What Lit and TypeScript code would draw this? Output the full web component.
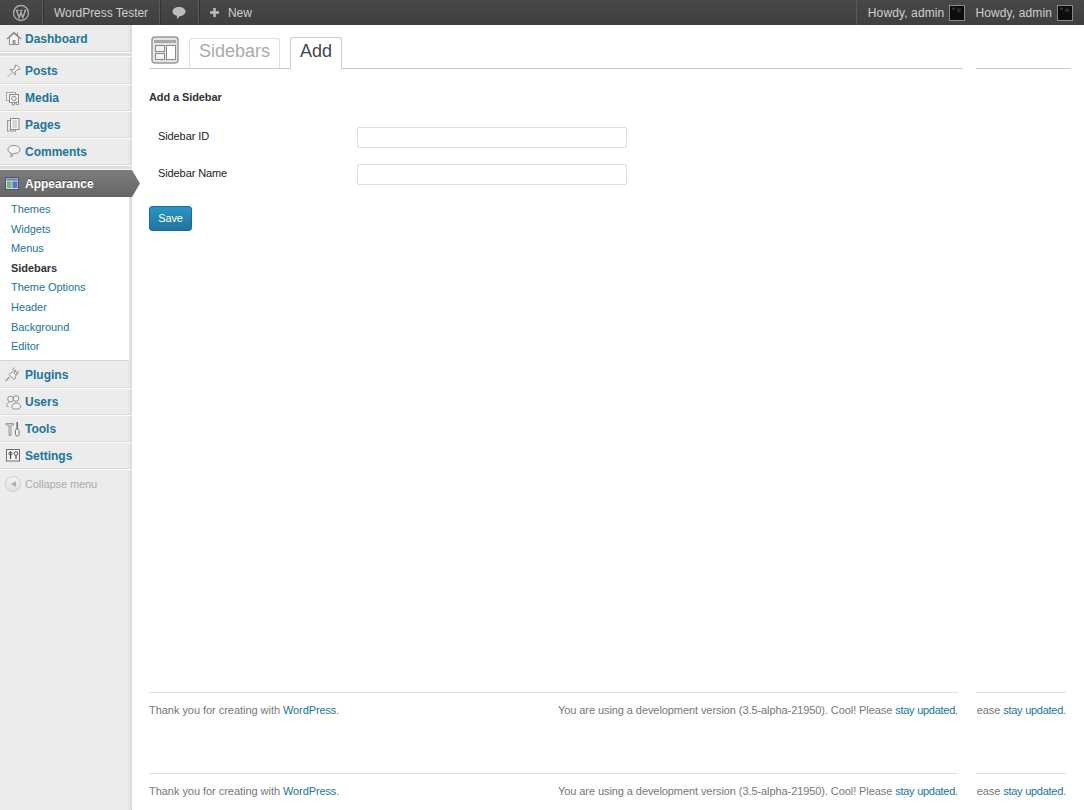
import { LitElement, html, css, svg } from "lit";
import { customElement } from "lit/decorators.js";

const INK = "#8c8c8c";
const FILL = "#f4f4f4";

const icons: Record<string, unknown> = {
  dashboard: svg`<path d="M4.500 8.500V15.500H13.500V8.500L9 4.500z" fill=${FILL} stroke=${INK}/><path d="M2 10 9 3.500 16 10" fill="none" stroke=${INK} stroke-width="1.300"/><path d="M12.500 3.500V6.500" stroke=${INK}/><rect x="7.500" y="11" width="3" height="4.500" fill="#999"/>`,
  posts: svg`<path d="M2.500 16 7 11.500" stroke="#aaa"/><path d="M5 8.500 8 9l2.500-3L10 4.500 11.500 4 15 7.500l-1 1.500-1.500-.5L10 11l.5 3z" fill=${FILL} stroke=${INK} stroke-linejoin="round"/>`,
  media: svg`<rect x="1.500" y="4.500" width="9" height="8" fill=${FILL} stroke="#a5a5a5"/><rect x="4.500" y="6.500" width="9" height="8" fill=${FILL} stroke=${INK}/><circle cx="9" cy="10.500" r="2.200" fill="none" stroke=${INK}/><circle cx="8.500" cy="15.800" r="1.300" fill="#fff" stroke="#777"/><circle cx="12.500" cy="15.500" r="1.300" fill="#fff" stroke="#777"/>`,
  pages: svg`<rect x="2.500" y="5.500" width="8" height="10.500" fill="#e6e6e6" stroke="#999"/><rect x="5.500" y="3.500" width="8.500" height="11" fill=${FILL} stroke=${INK}/><path d="M7.500 6h4.500M7.500 8h4.500M7.500 10h4.500M7.500 12h4.500" stroke="#b5b5b5"/>`,
  comments: svg`<path d="M9 3.500c3.500 0 6 1.500 6 4s-2.500 4-5.500 4H8L6.500 15l-.5-.2V11C4 10.500 3 9 3 7.500c0-2.500 2.500-4 6-4z" fill=${FILL} stroke=${INK} stroke-linejoin="round"/>`,
  plugins: svg`<path d="M.500 16 4.500 12" stroke="#999" stroke-width="1.200"/><path d="M4 9.500 9 14.500l1.500-1.500-.5-1.500 3-3-.5-1-2 2-1.500-1.500 2-2.500-1-.5L7 7.500 5.500 8z" fill=${FILL} stroke=${INK} stroke-linejoin="round"/><path d="M9 2.500 7.500 5M14 6 11.500 7.500" stroke="#999"/>`,
  users: svg`<circle cx="5.500" cy="7" r="2.800" fill=${FILL} stroke=${INK}/><circle cx="11" cy="6.500" r="2.800" fill=${FILL} stroke=${INK}/><path d="M3.500 15c-2.500-.5-2.500-3 .5-5M7.500 16.500c-1.500-2 .5-5.500 3.500-5.500 3.500 0 5.500 2.500 4 5-.5 1-6 1.500-7.500.5z" fill=${FILL} stroke=${INK}/>`,
  tools: svg`<path d="M1 4.500H8.500V6H6V16.500H4V6H1z" fill="#dcdcdc" stroke=${INK} stroke-width=".8"/><rect x="10.500" y="10" width="3.500" height="7" rx="1.500" fill=${FILL} stroke="#777"/><path d="M12.200 3v7" stroke="#666" stroke-width="1.500"/>`,
  settings: svg`<rect x="1.500" y="3.500" width="13" height="11.500" fill=${FILL} stroke="#6e6e6e"/><path d="M5.500 6v7M11 9v4" stroke="#555" stroke-width="1.300"/><circle cx="5.500" cy="7.500" r="1.600" fill="none" stroke="#555"/><circle cx="11" cy="7.500" r="1.900" fill="#fff" stroke="#555"/>`,
  appearance: svg`<rect x=".500" y="3.500" width="13" height="12" fill="#cfd8e2" stroke="#48586a"/><rect x="1.500" y="4.500" width="11" height="2" fill="#5f7f9f"/><rect x="2" y="7.500" width="4.500" height="6.500" fill="#7db56f"/><rect x="7.500" y="7.500" width="5" height="6.500" fill="#5e74c8"/>`,
};

const TOP_A = [["Dashboard", "dashboard"]];
const TOP_B = [["Posts", "posts"], ["Media", "media"], ["Pages", "pages"], ["Comments", "comments"]];
const SUB = ["Themes", "Widgets", "Menus", "Sidebars", "Theme Options", "Header", "Background", "Editor"];
const TOP_C = [["Plugins", "plugins"], ["Users", "users"], ["Tools", "tools"], ["Settings", "settings"]];

@customElement("app-root")
export class AppRoot extends LitElement {
  static styles = css`
    :host {
      display: block;
      height: 810px;
      overflow: hidden;
      background: #fff;
      font-family: "Liberation Sans", Arial, sans-serif;
      font-size: 11px;
      letter-spacing: -0.1px;
      color: #333;
    }

    a {
      color: #21759b;
      text-decoration: none;
    }

    /* admin bar */
    .bar {
      display: flex;
      justify-content: space-between;
      height: 25px;
      background: linear-gradient(#484848, #3f3f3f);
      color: #cfcfcf;
      font-size: 12px;
      letter-spacing: -0.06px;
    }

    .bar-group {
      display: flex;
    }

    .bar-item {
      display: flex;
      align-items: center;
      border-right: 1px solid #5a5a5a;
      box-shadow: 1px 0 0 #333;
    }

    .bar-item.wp {
      width: 43px;
      box-sizing: border-box;
      padding-left: 12px;
    }

    .bar-item.site {
      padding: 0 11px;
    }

    .bar-item.bubble {
      padding: 0 11px;
    }

    .bar-item.new {
      padding-left: 10px;
      gap: 8px;
      border: none;
      box-shadow: none;
    }

    .howdy {
      display: flex;
      align-items: center;
      gap: 5px;
      margin-left: 10px;
      letter-spacing: 0.12px;
    }

    .howdy.first {
      margin-left: 0;
      padding-left: 11px;
      border-left: 1px solid #5a5a5a;
    }

    .howdy.last {
      padding-right: 11px;
    }

    .avatar {
      width: 14px;
      height: 14px;
      border: 1px solid #8a8a8a;
      background:
        radial-gradient(circle at 25% 20%, #4a4a4a 0, transparent 2px),
        radial-gradient(circle at 65% 30%, #3c3c3c 0, transparent 3px),
        #0d0d0d;
    }

    .layout {
      display: flex;
      height: 785px;
    }

    /* side menu */
    .menu {
      flex: none;
      width: 132px;
      background: linear-gradient(to right, #ececec 128px, #e3e3e3 130px, #d6d6d6 132px);
      font-weight: bold;
      font-size: 12px;
      letter-spacing: 0;
    }

    .menu-item {
      display: flex;
      align-items: center;
      height: 24px;
      padding: 2px 0 0 25px;
      position: relative;
      border-bottom: 1px solid #dcdcdc;
      box-shadow: 0 1px 0 #f8f8f8;
    }

    .menu-item svg {
      position: absolute;
      left: 5px;
      top: 4px;
    }

    .menu-sep {
      height: 4px;
      background: #dedede;
      border-bottom: 1px solid #f6f6f6;
    }

    .current {
      position: relative;
      display: flex;
      align-items: center;
      width: 140px;
      height: 27px;
      box-sizing: border-box;
      padding-left: 25px;
      color: #fff;
      background: linear-gradient(#7c7c7c, #666);
      text-shadow: 0 -1px 0 #444;
      clip-path: polygon(0 0, 132px 0, 140px 50%, 132px 100%, 0 100%);
    }

    .current svg {
      position: absolute;
      left: 5px;
      top: 4px;
    }

    .sub {
      display: flex;
      flex-direction: column;
      margin-right: 3px;
      background: #fff;
      font-weight: normal;
      font-size: 11px;
      letter-spacing: -0.05px;
      padding: 3px 0 3px 11px;
      border-bottom: 1px solid #d6d6d6;
      height: 157px;
    }

    .sub > * {
      height: 19.600px;
      line-height: 19.600px;
    }

    .sub .on {
      color: #333;
      font-weight: bold;
    }

    .collapse {
      display: flex;
      align-items: center;
      gap: 4px;
      height: 30px;
      padding-left: 5px;
      color: #aaa;
      font-weight: normal;
      font-size: 11px;
      letter-spacing: -0.1px;
    }

    .collapse i {
      display: flex;
      align-items: center;
      justify-content: center;
      width: 14px;
      height: 14px;
      border: 1px solid #d0d0d0;
      border-radius: 50%;
      background: linear-gradient(#f4f4f4, #e0e0e0);
    }

    .collapse i::before {
      content: "";
      border-style: solid;
      border-width: 3.500px 5px 3.500px 0;
      border-color: transparent #b0b0b0 transparent transparent;
    }

    /* page */
    .main {
      flex: 1;
      display: flex;
      flex-direction: column;
      padding-left: 17px;
      min-width: 0;
    }

    .head-row {
      display: flex;
      height: 44px;
    }

    .tabs {
      width: 814px;
      display: flex;
      align-items: flex-end;
      height: 44px;
      box-sizing: border-box;
      border-bottom: 1px solid #ccc;
    }

    .tabs-extra {
      width: 95px;
      margin-left: 13px;
      height: 44px;
      box-sizing: border-box;
      border-bottom: 1px solid #ccc;
    }

    .page-icon {
      margin: 0 9px 3px 1px;
      display: block;
    }

    .tab {
      height: 30px;
      box-sizing: border-box;
      padding: 0 9px;
      border: 1px solid #dfdfdf;
      border-bottom: none;
      border-radius: 3px 3px 0 0;
      font-size: 18px;
      line-height: 25px;
      letter-spacing: 0;
      color: #aaa;
      margin-right: 10px;
    }

    .tab.active {
      height: 32px;
      line-height: 26px;
      color: #464646;
      border-color: #ccc;
      margin-bottom: -1px;
      background: #fff;
    }

    h3 {
      margin: 22px 0 0;
      font-size: 11px;
      line-height: 13px;
      color: #333;
      font-weight: bold;
    }

    .form {
      display: grid;
      grid-template-columns: 199px 270px;
      grid-auto-rows: 21px;
      row-gap: 16px;
      margin-top: 23px;
      padding-left: 9px;
      align-items: center;
      font-size: 11px;
      color: #222;
    }

    .form label {
      margin-top: -3px;
    }

    .input {
      box-sizing: border-box;
      height: 21px;
      border: 1px solid #dfdfdf;
      border-radius: 2px;
      background: #fff;
    }

    .save {
      align-self: flex-start;
      box-sizing: border-box;
      width: 43px;
      height: 25px;
      margin-top: 21px;
      line-height: 23px;
      text-align: center;
      font-size: 11px;
      color: #fff;
      border: 1px solid #1b6a8f;
      border-radius: 3px;
      background: linear-gradient(#2a95c5, #21759b);
    }

    .footers {
      margin-top: 461px;
    }

    .foot-row {
      display: flex;
      height: 81px;
      color: #777;
      font-size: 11px;
      letter-spacing: -0.08px;
    }

    .foot {
      width: 809px;
      display: flex;
      justify-content: space-between;
      box-sizing: border-box;
      height: 32px;
      padding-top: 11px;
      border-top: 1px solid #dfdfdf;
    }

    .foot .thanks {
      letter-spacing: -0.04px;
    }

    .foot .thanks a {
      letter-spacing: -0.11px;
    }

    .stay {
      letter-spacing: -0.27px;
    }

    .foot-clip {
      width: 90px;
      margin-left: 18px;
      box-sizing: border-box;
      height: 32px;
      padding-top: 11px;
      border-top: 1px solid #dfdfdf;
      white-space: nowrap;
      display: flex;
      justify-content: flex-end;
    }
  `;

  private icon(name: string) {
    return html`<svg width="18" height="18" viewBox="0 0 18 18">${icons[name]}</svg>`;
  }

  private item(label: string, icon: string) {
    return html`<a class="menu-item" href="#">${this.icon(icon)}${label}</a>`;
  }

  private footer() {
    const link = html`<a class="stay" href="#">stay updated</a>`;
    return html`
      <div class="foot-row">
        <div class="foot">
          <span class="thanks">Thank you for creating with <a href="#">WordPress</a>.</span>
          <span>You are using a development version (3.5-alpha-21950). Cool! Please ${link}.</span>
        </div>
        <div class="foot-clip"><span>ease ${link}.</span></div>
      </div>
    `;
  }

  render() {
    return html`
      <div class="bar">
        <div class="bar-group">
          <div class="bar-item wp">
            <svg width="18" height="18" viewBox="0 0 18 18">
              <circle cx="9" cy="9" r="7.500" fill="none" stroke="#aaa" stroke-width="1.400" />
              <path d="M4.500 6.500l2.700 7 1.800-5 1.800 5 2.700-7M3.800 6.500h3M8 6.500h2.500M12 6.500h2.300" fill="none" stroke="#aaa" stroke-width="1.500" />
            </svg>
          </div>
          <div class="bar-item site">WordPress Tester</div>
          <div class="bar-item bubble">
            <svg width="16" height="14" viewBox="0 0 16 14">
              <path d="M8 1c3.800 0 6.500 1.800 6.500 4.500S11.800 10 9 10l-3 3V9.800C3.500 9.300 1.500 7.800 1.500 5.500 1.500 2.800 4.200 1 8 1z" fill="#bdbdbd" />
            </svg>
          </div>
          <div class="bar-item new">
            <svg width="11" height="11" viewBox="0 0 11 11"><path d="M5.500 1v9M1 5.500h9" stroke="#bdbdbd" stroke-width="2.500" /></svg>
            New
          </div>
        </div>
        <div class="bar-group">
          <div class="howdy first">Howdy, admin <span class="avatar"></span></div>
          <div class="howdy last">Howdy, admin <span class="avatar"></span></div>
        </div>
      </div>
      <div class="layout">
        <nav class="menu">
          ${TOP_A.map(([l, i]) => this.item(l, i))}
          <div class="menu-sep"></div>
          ${TOP_B.map(([l, i]) => this.item(l, i))}
          <div class="menu-sep"></div>
          <div class="current">${this.icon("appearance")}Appearance</div>
          <div class="sub">
            ${SUB.map((s) => s === "Sidebars" ? html`<span class="on">${s}</span>` : html`<a href="#">${s}</a>`)}
          </div>
          ${TOP_C.map(([l, i]) => this.item(l, i))}
          <div class="collapse"><i></i>Collapse menu</div>
        </nav>
        <main class="main">
          <div class="head-row">
            <div class="tabs">
              <svg class="page-icon" width="30" height="30" viewBox="0 0 30 30">
                <rect x="2" y="2" width="26" height="26" rx="3" fill="#e4e4e4" stroke="#9a9a9a" stroke-width="1.500" />
                <rect x="4" y="5" width="22" height="3" fill="#a8a8a8" />
                <rect x="5.500" y="10.500" width="9" height="6" fill="#f2f2f2" stroke="#8a8a8a" />
                <rect x="5.500" y="18.500" width="9" height="6" fill="#f2f2f2" stroke="#8a8a8a" />
                <rect x="16.500" y="10.500" width="9" height="14" fill="#fff" stroke="#8a8a8a" />
              </svg>
              <span class="tab">Sidebars</span>
              <span class="tab active">Add</span>
            </div>
            <div class="tabs-extra"></div>
          </div>
          <h3>Add a Sidebar</h3>
          <div class="form">
            <label>Sidebar ID</label><div class="input"></div>
            <label>Sidebar Name</label><div class="input"></div>
          </div>
          <div class="save">Save</div>
          <div class="footers">${this.footer()}${this.footer()}</div>
        </main>
      </div>
    `;
  }
}
